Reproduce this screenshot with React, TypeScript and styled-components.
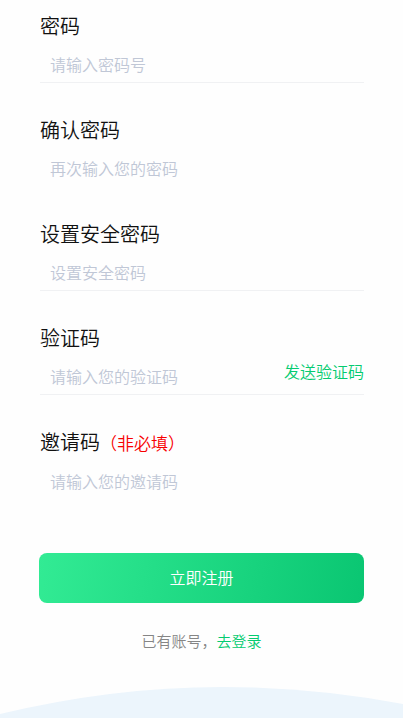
import React from 'react';

import styled, { createGlobalStyle } from 'styled-components';

const GlobalStyle = createGlobalStyle`
    * {
        box-sizing: border-box;
    }

    body {
        margin: 0;
        background: #fefefe;
    }

    body, input, button {
        font-family: 'Noto Sans CJK SC DemiLight', 'Noto Sans CJK SC', sans-serif;
        font-weight: 350;
    }
`;

const Page = styled.main`
    display: flex;
    flex-direction: column;
    min-height: 100vh;
`;

const Form = styled.form`
    display: flex;
    flex-direction: column;
    padding: 12px 39px 0;
`;

const Fields = styled.div`
    display: flex;
    flex-direction: column;
    gap: 33px;
    padding-left: 1px;
`;

const Field = styled.div`
    display: flex;
    flex-direction: column;
    gap: 6px;
`;

const Label = styled.label`
    font-size: 20px;
    line-height: 28px;
    color: #111;
`;

const Optional = styled.span`
    font-size: 17px;
    color: #f80000;
`;

const InputRow = styled.div<{ $underlined?: boolean }>`
    display: flex;
    height: 37px;
    border-bottom: 1px solid ${({ $underlined }) => ($underlined ? '#f0f1f3' : 'transparent')};
`;

const Input = styled.input`
    flex: 1;
    min-width: 0;
    padding: 0 10px 1px;
    border: none;
    outline: none;
    background: transparent;
    font-size: 16px;
    color: #111;

    &::placeholder {
        color: #c0c7d6;
        opacity: 1;
    }
`;

const CodeButton = styled.button`
    align-self: flex-start;
    padding: 0;
    border: none;
    background: none;
    font-size: 16px;
    line-height: 26px;
    color: #04cb70;
    cursor: pointer;
`;

const SubmitButton = styled.button`
    height: 50px;
    margin-top: 53px;
    padding: 0 0 2px;
    border: none;
    border-radius: 8px;
    background: linear-gradient(100deg, #32eb94, #0ac672);
    font-size: 16px;
    color: #fff;
    cursor: pointer;
`;

const LoginHint = styled.p`
    margin: 27px 0;
    font-size: 15px;
    line-height: 22px;
    text-align: center;
    color: #858585;
`;

const LoginLink = styled.a`
    color: #04cb70;
    text-decoration: none;
`;

const Wave = styled.svg`
    display: block;
    width: 100%;
    height: 31px;
    margin-top: auto;
`;

interface FieldConfig {
    id: string;
    label: string;
    placeholder: string;
    type: 'password' | 'text';
    underlined?: boolean;
    optional?: boolean;
    sendCode?: boolean;
}

const fields: FieldConfig[] = [
    { id: 'password', label: '密码', placeholder: '请输入密码号', type: 'password', underlined: true },
    { id: 'confirm', label: '确认密码', placeholder: '再次输入您的密码', type: 'password' },
    {
        id: 'security',
        label: '设置安全密码',
        placeholder: '设置安全密码',
        type: 'password',
        underlined: true,
    },
    {
        id: 'code',
        label: '验证码',
        placeholder: '请输入您的验证码',
        type: 'text',
        underlined: true,
        sendCode: true,
    },
    { id: 'invite', label: '邀请码', placeholder: '请输入您的邀请码', type: 'text', optional: true },
];

const FormField: React.FC<{ field: FieldConfig }> = ({ field }) => {
    return (
        <Field>
            <Label htmlFor={field.id}>
                {field.label}
                {field.optional && <Optional>（非必填）</Optional>}
            </Label>
            <InputRow $underlined={field.underlined}>
                <Input id={field.id} type={field.type} placeholder={field.placeholder} />
                {field.sendCode && <CodeButton type="button">发送验证码</CodeButton>}
            </InputRow>
        </Field>
    );
};

const App: React.FC = () => {
    return (
        <Page>
            <GlobalStyle />
            <Form onSubmit={(event) => event.preventDefault()}>
                <Fields>
                    {fields.map((field) => (
                        <FormField key={field.id} field={field} />
                    ))}
                </Fields>
                <SubmitButton type="submit">立即注册</SubmitButton>
            </Form>
            <LoginHint>
                已有账号，<LoginLink href="#login">去登录</LoginLink>
            </LoginHint>
            <Wave viewBox="0 0 403 31" preserveAspectRatio="none" aria-hidden="true">
                <path d="M0 27 Q113 0 222 0 Q312 0 403 17 V31 H0 Z" fill="#ecf5fc" />
            </Wave>
        </Page>
    );
};

export default App;
